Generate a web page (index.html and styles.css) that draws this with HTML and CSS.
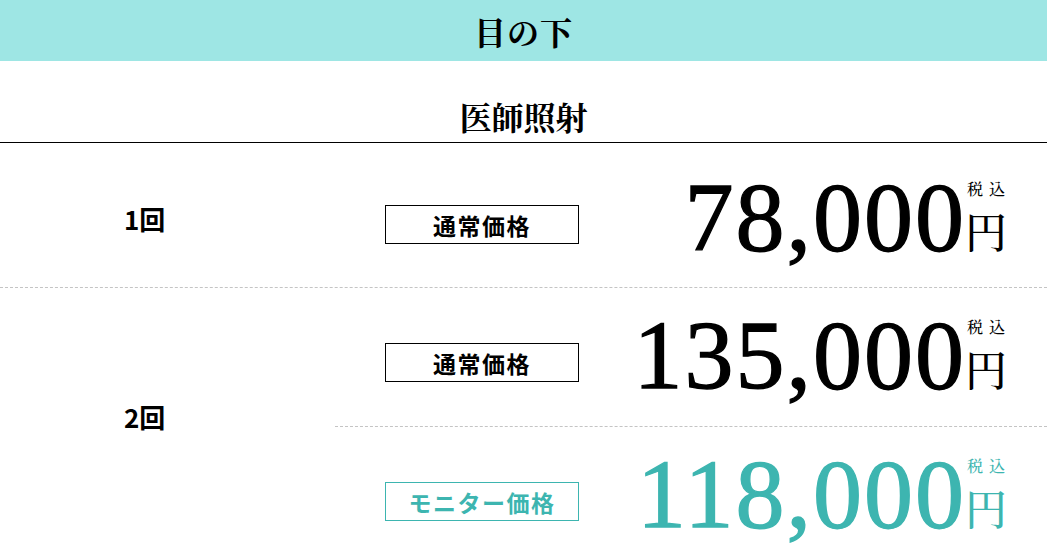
FILE: index.html
```html
<!DOCTYPE html>
<html lang="ja">
<head>
<meta charset="utf-8">
<link rel="stylesheet" href="styles.css">
</head>
<body>
<header class="area-head"><h1 class="area-title">目の下</h1></header>
<section class="plan">
  <h2 class="plan-title">医師照射</h2>
  <div class="row row-first">
    <div class="count">1回</div>
    <div class="prices">
      <div class="price-line">
        <span class="tag">通常価格</span>
        <div class="price">
          <span class="num">78,000</span>
          <span class="unit"><span class="tax">税込</span><span class="yen">円</span></span>
        </div>
      </div>
    </div>
  </div>
  <div class="row row-second">
    <div class="count">2回</div>
    <div class="prices">
      <div class="price-line sub-divided">
        <span class="tag">通常価格</span>
        <div class="price">
          <span class="num">135,000</span>
          <span class="unit"><span class="tax">税込</span><span class="yen">円</span></span>
        </div>
      </div>
      <div class="price-line monitor">
        <span class="tag">モニター価格</span>
        <div class="price">
          <span class="num">118,000</span>
          <span class="unit"><span class="tax">税込</span><span class="yen">円</span></span>
        </div>
      </div>
    </div>
  </div>
</section>
</body>
</html>
```
FILE: styles.css
```css
* { box-sizing: border-box; }
html, body { margin: 0; padding: 0; background: #fff; }
body {
  font-family: "Noto Sans CJK JP", sans-serif;
  color: #000;
  overflow: hidden;
}
.area-head {
  height: 61px;
  background: #9ee6e4;
  display: flex;
  align-items: center;
  justify-content: center;
}
.area-title {
  margin: 0;
  font-family: "Noto Serif CJK JP", "Liberation Serif", "Noto Sans CJK JP", serif;
  font-size: 32px;
  font-weight: 700;
  letter-spacing: 1px;
  line-height: 1;
}
.plan-title {
  margin: 0;
  height: 82px;
  padding-top: 39px;
  text-align: center;
  font-family: "Noto Serif CJK JP", "Liberation Serif", "Noto Sans CJK JP", serif;
  font-size: 32px;
  font-weight: 700;
  line-height: 1;
  border-bottom: 1px solid #000;
}
.row {
  display: flex;
  align-items: center;
  border-bottom: 1px dashed #c4c4c4;
}
.count {
  width: 335px;
  flex: none;
  padding-left: 124px;
  font-size: 26px;
  font-weight: 700;
  line-height: 1;
  font-family: "Noto Sans CJK JP", sans-serif;
}
.row-first .count { margin-top: 8px; }
.row-second .count { margin-bottom: 20px; }
.prices { flex: 1; }
.price-line {
  height: 138px;
  padding: 0 40px 4px 50px;
  display: flex;
  align-items: center;
  justify-content: space-between;
}
.row-first .price-line {
  height: 144px;
  padding-top: 4px;
  padding-bottom: 0;
}
.sub-divided { border-bottom: 1px dashed #c4c4c4; height: 139px; }
.tag {
  width: 194px;
  height: 39px;
  margin-top: 15px;
  border: 1px solid #000;
  display: flex;
  align-items: center;
  justify-content: center;
  font-size: 23px;
  font-weight: 700;
  letter-spacing: 1.5px;
}
.price {
  display: flex;
  align-items: flex-end;
}
.num {
  font-family: "Liberation Serif", serif;
  font-size: 98px;
  line-height: 1;
  font-weight: 400;
  letter-spacing: 2px;
  -webkit-text-stroke: 1.3px currentColor;
}
.unit {
  display: flex;
  flex-direction: column;
  align-items: center;
  margin-left: -1px;
  margin-bottom: 5px;
  font-family: "Noto Serif CJK JP", "Noto Sans CJK JP", serif;
}
.tax {
  font-size: 16px;
  font-weight: 500;
  line-height: 23px;
  letter-spacing: 6px;
  margin-right: -6px;
}
.yen {
  font-size: 42px;
  font-weight: 500;
  line-height: 61px;
}
.monitor { color: #3db5b0; }
.monitor .tag { border-color: #3db5b0; }
```
